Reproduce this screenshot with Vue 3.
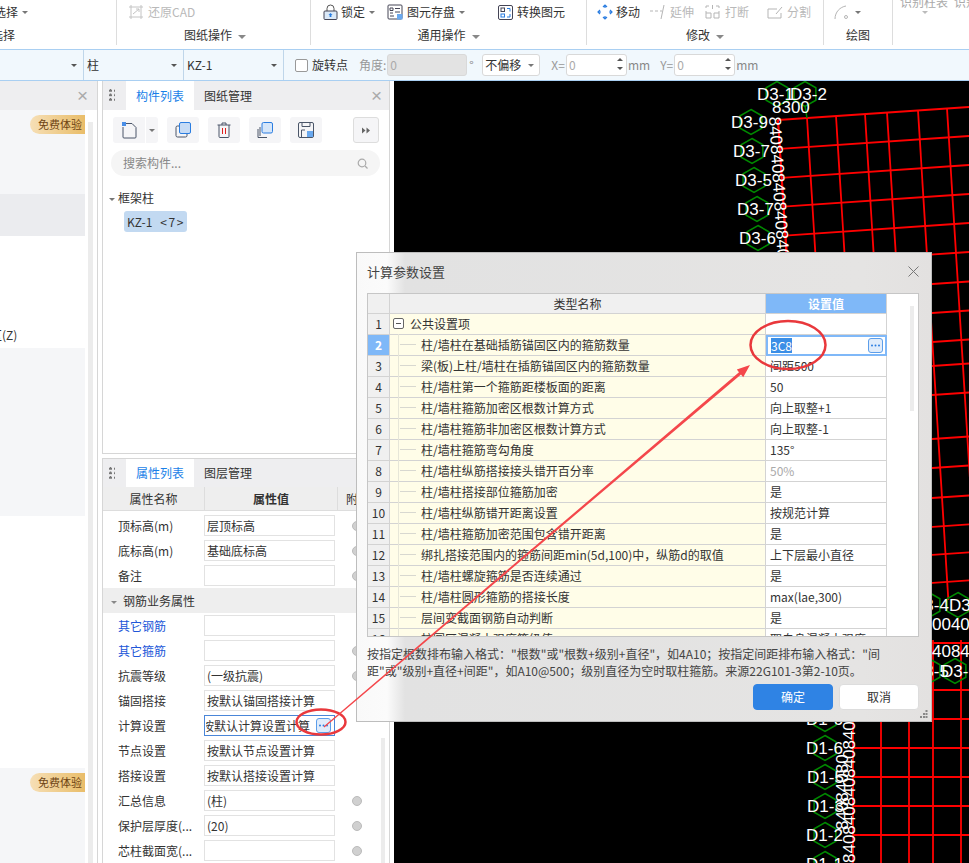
<script setup>
const props = [
  { label: '顶标高(m)', value: '层顶标高', radio: true },
  { label: '底标高(m)', value: '基础底标高', radio: true },
  { label: '备注', value: '', radio: true },
  { group: '钢筋业务属性' },
  { label: '其它钢筋', value: '', link: true },
  { label: '其它箍筋', value: '', link: true, radio: true },
  { label: '抗震等级', value: '(一级抗震)', radio: true },
  { label: '锚固搭接', value: '按默认锚固搭接计算' },
  { label: '计算设置', value: '按默认计算设置计算', focus: true },
  { label: '节点设置', value: '按默认节点设置计算' },
  { label: '搭接设置', value: '按默认搭接设置计算' },
  { label: '汇总信息', value: '(柱)', radio: true },
  { label: '保护层厚度(...', value: '(20)', radio: true },
  { label: '芯柱截面宽(...', value: '', radio: true },
]

const params = [
  { name: '柱/墙柱在基础插筋锚固区内的箍筋数量', value: '3C8', editing: true },
  { name: '梁(板)上柱/墙柱在插筋锚固区内的箍筋数量', value: '间距500' },
  { name: '柱/墙柱第一个箍筋距楼板面的距离', value: '50' },
  { name: '柱/墙柱箍筋加密区根数计算方式', value: '向上取整+1' },
  { name: '柱/墙柱箍筋非加密区根数计算方式', value: '向上取整-1' },
  { name: '柱/墙柱箍筋弯勾角度', value: '135°' },
  { name: '柱/墙柱纵筋搭接接头错开百分率', value: '50%', muted: true },
  { name: '柱/墙柱搭接部位箍筋加密', value: '是' },
  { name: '柱/墙柱纵筋错开距离设置', value: '按规范计算' },
  { name: '柱/墙柱箍筋加密范围包含错开距离', value: '是' },
  { name: '绑扎搭接范围内的箍筋间距min(5d,100)中，纵筋d的取值', value: '上下层最小直径' },
  { name: '柱/墙柱螺旋箍筋是否连续通过', value: '是' },
  { name: '柱/墙柱圆形箍筋的搭接长度', value: 'max(lae,300)' },
  { name: '层间变截面钢筋自动判断', value: '是' },
  { name: '柱圆区混凝土强度等级值', value: '取自身混凝土强度' },
]

// upper grid is slightly rotated, lines are listed by where they cross x=932
const rowYs = [109.5, 138.5, 167.5, 196.5, 225.5, 254.5, 284, 313, 342, 366, 395, 439, 468, 498, 527, 555, 583]
const upperRows = rowYs.map((y, i) => {
  const x1 = 778 + (((y + 10.5 - 120) * 0.06))
  return { x1, y1: y + (932 - x1) * 0.0683, x2: 969, y2: y - 37 * 0.0683, key: i }
})
const upperCols = [778, 807, 836, 865, 887, 918, 947].map((x) => {
  const y1 = 120 - (x - 778) * 0.0683
  return { x1: x, y1, x2: x + (600 - y1) * 0.062, y2: 600 }
})
const lowerRows = [643, 690, 719, 748, 777, 806, 835]
const lowerCols = [853, 881, 909, 933, 961]

const hex = (cx, cy) => {
  const r = 12.5
  const w = r * 0.87
  return `M${cx} ${cy - r}L${cx + w} ${cy - r / 2}L${cx + w} ${cy + r / 2}L${cx} ${cy + r}L${cx - w} ${cy + r / 2}L${cx - w} ${cy - r / 2}Z`
}
const bubbles = [
  { cx: 777, cy: 94, tx: 757, ty: 100, t: 'D3-1' },
  { cx: 805, cy: 94, tx: 790, ty: 100, t: 'D3-2' },
  { cx: 751, cy: 122, tx: 731, ty: 128, t: 'D3-9' },
  { cx: 752, cy: 151, tx: 733, ty: 157, t: 'D3-7' },
  { cx: 754, cy: 180, tx: 735, ty: 186, t: 'D3-5' },
  { cx: 757, cy: 209, tx: 737, ty: 215, t: 'D3-7' },
  { cx: 758, cy: 238, tx: 739, ty: 244, t: 'D3-6' },
  { cx: 825, cy: 719, tx: 806, ty: 725, t: 'D1-6' },
  { cx: 825, cy: 748, tx: 806, ty: 754, t: 'D1-6' },
  { cx: 825, cy: 777, tx: 807, ty: 783, t: 'D1-5' },
  { cx: 825, cy: 806, tx: 807, ty: 812, t: 'D1-3' },
  { cx: 825, cy: 835, tx: 806, ty: 841, t: 'D1-2' },
  { cx: 825, cy: 864, tx: 806, ty: 870, t: 'D1-1' },
  { cx: 929, cy: 605, tx: 912, ty: 611, t: 'D3-4' },
  { cx: 958, cy: 605, tx: 949, ty: 611, t: 'D3-' },
  { cx: 929, cy: 671, tx: 912, ty: 677, t: 'D3-5' },
  { cx: 955, cy: 671, tx: 941, ty: 677, t: 'D3-6' },
]
</script>

<template>
  <div class="app">
    <div class="ribbon">
      <div class="rgroup g1">
        <div class="tools"><span>选择</span><i class="caret"></i></div>
        <div class="rlabel">选择</div>
      </div>
      <div class="rgroup g2">
        <div class="tools off">
          <svg class="ico" width="16" height="16" viewBox="0 0 16 16" fill="none" stroke="#c4c4c4"><path d="M1 3h14M1 13h14M3 1v14M13 1v14M5 10l6-5M8 5l3 0v3"/></svg>
          <span>还原CAD</span>
        </div>
        <div class="rlabel">图纸操作<i class="caret big"></i></div>
      </div>
      <div class="rgroup g3">
        <div class="tools">
          <span class="tool t-lock">
            <svg class="ico" width="15" height="16" viewBox="0 0 15 16" fill="none"><path d="M4 7V4.500a3.500 3.500 0 0 1 7 0V7" stroke="#555"/><rect x="1" y="7" width="13" height="8.500" rx="1" fill="#dbe9f8" stroke="#445"/><path d="M7.500 9l2 2H8.400v2H6.600v-2H5.500z" fill="#2a7de1"/></svg>
            <span>锁定</span><i class="caret"></i>
          </span>
          <span class="tool t-save">
            <svg class="ico" width="16" height="16" viewBox="0 0 16 16" fill="none"><rect x="1" y="1" width="14" height="14" rx="1" stroke="#445"/><path d="M3 4h3v2.500H3zM8 4.500h5M3 9h3M8 8h5M3 12h4" stroke="#445"/><rect x="10" y="10" width="5.500" height="5.500" fill="#6aa9ef"/></svg>
            <span>图元存盘</span><i class="caret"></i>
          </span>
          <span class="tool t-conv">
            <svg class="ico" width="15" height="15" viewBox="0 0 15 15" fill="none"><rect x=".5" y=".5" width="14" height="14" rx="1.500" stroke="#445"/><rect x="3" y="3" width="3.500" height="3.500" stroke="#445"/><rect x="3" y="9" width="3.500" height="3" stroke="#2a7de1"/><path d="M9 3.500h3v3M12 9v3H9" stroke="#2a7de1"/></svg>
            <span>转换图元</span>
          </span>
        </div>
        <div class="rlabel">通用操作<i class="caret big"></i></div>
      </div>
      <div class="rgroup g4">
        <div class="tools">
          <span class="tool">
            <svg class="ico" width="16" height="16" viewBox="0 0 16 16" fill="none" stroke="#2a7de1" stroke-width="1.200"><path d="M8 1v3M8 12v3M1 8h3M12 8h3M6 3l2-2 2 2M6 13l2 2 2-2M3 6L1 8l2 2M13 6l2 2-2 2"/></svg>
            <span>移动</span>
          </span>
          <span class="tool off t-ext">
            <svg class="ico" width="16" height="16" viewBox="0 0 16 16" fill="none" stroke="#b5b5b5"><path d="M0 7h3M5 7h3M10 7h2M14 1l-3 14"/></svg>
            <span>延伸</span>
          </span>
          <span class="tool off t-brk">
            <svg class="ico" width="17" height="16" viewBox="0 0 17 16" fill="none" stroke="#b5b5b5"><path d="M2 7v7h5V9H2M15 7v7h-5V9h5M8.500 1v4M2 4V2h3M15 4V2h-3"/></svg>
            <span>打断</span>
          </span>
          <span class="tool off t-cut">
            <svg class="ico" width="16" height="15" viewBox="0 0 16 15" fill="none" stroke="#b5b5b5"><path d="M10 4H1v9h13V8M9 9l6-7"/></svg>
            <span>分割</span>
          </span>
        </div>
        <div class="rlabel">修改<i class="caret big"></i></div>
      </div>
      <div class="rgroup g5">
        <div class="tools off">
          <svg class="ico" width="14" height="15" viewBox="0 0 14 15" fill="none" stroke="#b5b5b5"><path d="M1 14C1 7 6 2 12 1"/><circle cx="12" cy="12" r="1.500"/></svg>
          <i class="caret"></i>
        </div>
        <div class="rlabel">绘图</div>
      </div>
      <div class="rgroup g6">
        <div class="cutoff">识别柱表<span class="cutoff-2">识别</span></div>
        <i class="caret g6-caret"></i>
      </div>
    </div>

    <div class="optbar">
      <div class="osel w1"><i class="caret"></i></div>
      <div class="osel w2"><span>柱</span><i class="caret"></i></div>
      <div class="osel w2"><span>KZ-1</span><i class="caret"></i></div>
      <span class="check"></span>
      <span class="lbl-rot">旋转点</span>
      <span class="lbl-ang">角度:</span>
      <span class="field ang">0</span>
      <span class="deg">°</span>
      <span class="offset">不偏移<i class="caret"></i></span>
      <span class="lbl-xy lx">X=</span>
      <span class="field num">0<b class="spin"><i class="up"></i><i class="down"></i></b></span>
      <span class="unit">mm</span>
      <span class="lbl-xy ly">Y=</span>
      <span class="field num">0<b class="spin"><i class="up"></i><i class="down"></i></b></span>
      <span class="unit">mm</span>
    </div>

    <div class="work">
      <div class="leftp">
        <div class="ltitle"><span class="xmark">×</span></div>
        <div class="lbody">
          <div class="lrows">
            <div class="lr r1"><span class="badge">免费体验</span></div>
            <div class="lr r2"></div>
            <div class="lr r3"><span class="ztext">区(Z)</span></div>
            <div class="lr r4"></div>
            <div class="lr r5"></div>
            <div class="lr r6"><span class="badge">免费体验</span></div>
          </div>
          <div class="ltrack"></div>
        </div>
      </div>

      <div class="midc">
        <div class="panel top">
          <div class="tabbar">
            <span class="grip"></span>
            <span class="tab on">构件列表</span>
            <span class="tab">图纸管理</span>
            <span class="xmark tabx">×</span>
          </div>
          <div class="tbtns">
            <span class="tbtn first">
              <svg width="17" height="17" viewBox="0 0 17 17" fill="none"><path d="M3 1.500h8l4 4V15a1 1 0 0 1-1 1H3a1 1 0 0 1-1-1V5" stroke="#4a5568"/><rect x="1" y="0" width="4" height="4" fill="#4a8fe8"/></svg>
            </span>
            <span class="tbtn more"><i class="caret"></i></span>
            <span class="tbtn">
              <svg width="16" height="16" viewBox="0 0 16 16" fill="none"><rect x="1" y="4" width="11" height="11" rx="1.500" stroke="#4a5568"/><rect x="4.500" y=".5" width="11" height="11" rx="1.500" fill="#c6dbf5" stroke="#2a7de1"/></svg>
            </span>
            <span class="tbtn">
              <svg width="14" height="16" viewBox="0 0 14 16" fill="none" stroke="#4a5568"><path d="M.5 3h13M5 3V1h4v2M2 3v11.500a1 1 0 0 0 1 1h8a1 1 0 0 0 1-1V3"/><path d="M5.500 6v6M8.500 6v6" stroke="#e02020"/></svg>
            </span>
            <span class="tbtn">
              <svg width="16" height="16" viewBox="0 0 16 16" fill="none"><path d="M3 5v9M1 7v8.500h9" stroke="#4a5568"/><rect x="5" y=".5" width="10.500" height="10.500" rx="1.500" fill="#d6e6f9" stroke="#2a7de1"/></svg>
            </span>
            <span class="tbtn">
              <svg width="16" height="16" viewBox="0 0 16 16" fill="none"><rect x=".5" y=".5" width="15" height="15" rx="1.500" stroke="#4a5568"/><path d="M4 .5v4h8v-4M3.500 15.500V8H7" stroke="#4a5568"/><rect x="9" y="9" width="6" height="6" fill="#6aa9ef"/></svg>
            </span>
            <span class="tbtn expand">
              <svg width="8" height="7" viewBox="0 0 8 7" fill="#666"><path d="M0 .5l3.500 3-3.500 3zM4.500 .5l3.500 3-3.500 3z"/></svg>
            </span>
          </div>
          <div class="search">
            <span>搜索构件...</span>
            <svg width="11" height="11" viewBox="0 0 11 11" fill="none" stroke="#aaa" stroke-width="1.200"><circle cx="5" cy="5" r="3.800"/><path d="M8 8l2.500 2.500"/></svg>
          </div>
          <div class="tree"><i class="caret"></i>框架柱</div>
          <div class="chip">KZ-1<span class="chip-n">&lt;7&gt;</span></div>
        </div>

        <div class="panel bottom">
          <div class="tabbar">
            <span class="grip"></span>
            <span class="tab on">属性列表</span>
            <span class="tab">图层管理</span>
          </div>
          <div class="phead">
            <span class="pc1">属性名称</span>
            <span class="pc2">属性值</span>
            <span class="pc3">附加</span>
          </div>
          <div class="pbody">
            <template v-for="p in props" :key="p.label || p.group">
              <div v-if="p.group" class="pgroup"><i class="caret"></i>{{ p.group }}</div>
              <div v-else class="prow">
                <span class="plabel" :class="{ link: p.link }">{{ p.label }}</span>
                <span class="pval" :class="{ focus: p.focus }">
                  <span class="ptext">{{ p.value }}</span>
                  <b v-if="p.focus" class="dots">
                    <svg width="9" height="3" viewBox="0 0 9 3" fill="#2a7de1"><circle cx="1" cy="1.500" r="1"/><circle cx="4.500" cy="1.500" r="1"/><circle cx="8" cy="1.500" r="1"/></svg>
                  </b>
                </span>
                <span v-if="p.radio" class="radio"></span>
              </div>
            </template>
          </div>
          <div class="ptrack"></div>
        </div>
      </div>

      <div class="canvas">
        <svg class="cad" width="575" height="782" viewBox="394 81 575 782">
          <g stroke="#f00" stroke-width="1.800">
            <line x1="778" y1="120" x2="810" y2="600" />
            <line v-for="r in upperRows" :key="r.key" :x1="r.x1" :y1="r.y1" :x2="r.x2" :y2="r.y2" />
            <line v-for="c in upperCols" :key="c.x1" :x1="c.x1" :y1="c.y1" :x2="c.x2" :y2="c.y2" />
            <line v-for="y in lowerRows" :key="y" x1="853" :y1="y" x2="969" :y2="y" />
            <line v-for="x in lowerCols" :key="x" :x1="x" y1="640" :x2="x" y2="863" />
          </g>
          <g fill="none" stroke="#008a00" stroke-width="1.500">
            <line x1="805" y1="106" x2="807" y2="118" />
            <path v-for="b in bubbles" :key="b.t + b.cy" :d="hex(b.cx, b.cy)" />
          </g>
          <text v-for="b in bubbles" :key="b.t + b.ty" :x="b.tx" :y="b.ty" class="cadt">{{ b.t }}</text>
          <text x="772" y="113" class="cadt">8300</text>
          <text class="cadt" transform="translate(769 117) rotate(86.500)">840840840840840840</text>
          <text class="cadt" transform="translate(855 863) rotate(-90)">84084084084084084</text>
          <text class="cadt" transform="translate(848 830) rotate(-90)">84084080</text>
          <text x="932" y="630" class="cadt">00408408</text>
          <text x="932" y="657" class="cadt">408484</text>
        </svg>
      </div>
    </div>

    <div class="dialog">
      <div class="dhead">
        <span>计算参数设置</span>
        <svg width="11" height="11" viewBox="0 0 11 11" stroke="#777" fill="none"><path d="M.5.500l10 10M10.500.500l-10 10"/></svg>
      </div>
      <div class="dtable">
        <div class="trow thead">
          <span class="cnum"></span>
          <span class="cname">类型名称</span>
          <span class="cval">设置值</span>
        </div>
        <div class="trow">
          <span class="cnum">1</span>
          <span class="cname groupname"><i class="minus"></i>公共设置项</span>
          <span class="cval"></span>
        </div>
        <div v-for="(r, i) in params" :key="r.name" class="trow" :class="{ active: r.editing }">
          <span class="cnum">{{ i + 2 }}</span>
          <span class="cname"><i class="branch"></i>{{ r.name }}</span>
          <span class="cval" :class="{ muted: r.muted, editing: r.editing }">
            <span :class="{ sel: r.editing }">{{ r.value }}</span>
            <b v-if="r.editing" class="dots">
              <svg width="9" height="3" viewBox="0 0 9 3" fill="#2a7de1"><circle cx="1" cy="1.500" r="1"/><circle cx="4.500" cy="1.500" r="1"/><circle cx="8" cy="1.500" r="1"/></svg>
            </b>
          </span>
        </div>
        <div class="tscroll"></div>
      </div>
      <div class="dnote">
        <div>按指定根数排布输入格式："根数"或"根数+级别+直径"，如4A10；按指定间距排布输入格式："间</div>
        <div>距"或"级别+直径+间距"，如A10@500；级别直径为空时取柱箍筋。来源22G101-3第2-10页。</div>
      </div>
      <div class="dbtns">
        <button class="btn primary">确定</button>
        <button class="btn">取消</button>
      </div>
      <svg class="dgrip" width="8" height="8" viewBox="0 0 8 8" fill="#888"><rect x="5.500" y="0" width="2" height="2"/><rect x="3" y="3" width="2" height="2"/><rect x="5.500" y="3" width="2" height="2"/><rect x="0" y="6" width="2" height="2"/><rect x="3" y="6" width="2" height="2"/><rect x="5.500" y="6" width="2" height="2"/></svg>
    </div>

    <svg class="marks" width="969" height="863" viewBox="0 0 969 863" fill="none">
      <ellipse cx="788" cy="345" rx="37.500" ry="24" stroke="#e9383c" stroke-width="2.500" />
      <ellipse cx="321" cy="722" rx="24.500" ry="12.500" stroke="#e9383c" stroke-width="2.500" />
      <polygon points="750,365 743.200,377.200 741,374.500 324.400,727.400 323.600,726.600 739,372.300 736.800,369.600" fill="#f4474b" />
    </svg>
  </div>
</template>

<style scoped>
.app {
  position: relative;
  width: 969px;
  height: 863px;
  overflow: hidden;
  background: #fff;
  font: 12px/16px "Noto Sans CJK SC", "Noto Sans", sans-serif;
  color: #333;
}
i, b { font-style: normal; }
.caret {
  display: inline-block;
  width: 0;
  height: 0;
  border-left: 3px solid transparent;
  border-right: 3px solid transparent;
  border-top: 3px solid #777;
  vertical-align: middle;
}
.caret.big {
  border-left-width: 4px;
  border-right-width: 4px;
  border-top-width: 4px;
  margin-left: 6px;
  border-top-color: #888;
}

/* ribbon */
.ribbon {
  display: flex;
  height: 49px;
  border-bottom: 1px solid #a9cff2;
  overflow: hidden;
}
.rgroup {
  height: 45px;
  border-right: 1px solid #ddd;
  flex: none;
  box-sizing: border-box;
}
.g1 { width: 117px; }
.g2 { width: 194px; }
.g3 { width: 276px; }
.g4 { width: 237px; }
.g5 { width: 69px; }
.g6 { flex: 1; border-right: 0; position: relative; }
.tools {
  display: flex;
  align-items: center;
  height: 24px;
}
.rlabel {
  height: 21px;
  line-height: 21px;
  text-align: center;
  white-space: nowrap;
}
.tool {
  display: flex;
  align-items: center;
  flex: none;
}
.ico { flex: none; margin-right: 4px; }
.off { color: #b9b9b9; }
.g1 .tools { margin-left: -6px; }
.g1 .tools .caret { margin-left: 4px; }
.g1 .rlabel { margin-left: -9px; text-align: left; }
.g2 .tools { padding-left: 11px; }
.g2 .rlabel { padding-left: 3px; }
.g3 .tools { padding-left: 12px; }
.g3 .tools .caret { margin-left: 4px; }
.t-lock .ico { margin-right: 3px; }
.t-save { margin-left: 12px; }
.t-conv { margin-left: 33px; }
.g4 .tools { padding-left: 10px; }
.g4 .tool:first-child .ico { margin-right: 3px; }
.t-ext { margin-left: 10px; }
.t-brk { margin-left: 10px; }
.t-cut { margin-left: 18px; }
.g5 .tools { padding-left: 10px; }
.g5 .tools .caret { margin-left: 3px; }
.cutoff {
  position: absolute;
  left: 7px;
  top: -6px;
  color: #aaa;
  white-space: nowrap;
}
.cutoff-2 { margin-left: 6px; }
.g6-caret {
  position: absolute;
  left: 29px;
  top: 11px;
  border-top-color: #bbb;
}

/* options bar */
.optbar {
  display: flex;
  align-items: center;
  height: 31px;
  box-sizing: border-box;
  background: #f1f8fd;
  border-bottom: 1px solid #a9cff2;
}
.osel {
  display: flex;
  align-items: center;
  justify-content: space-between;
  height: 30px;
  box-sizing: border-box;
  border-right: 1px solid #bfd6ea;
  padding: 0 6px 0 3px;
  flex: none;
}
.w1 { width: 84px; justify-content: flex-end; }
.w2 { width: 100px; }
.osel .caret { border-top-color: #555; }
.check {
  width: 13px;
  height: 13px;
  margin-left: 11px;
  border: 1px solid #999;
  border-radius: 2px;
  background: #fff;
  box-sizing: border-box;
  flex: none;
}
.lbl-rot { margin-left: 4px; }
.lbl-ang { margin-left: 11px; color: #999; }
.field {
  box-sizing: border-box;
  height: 22px;
  line-height: 20px;
  border: 1px solid #d9d9d9;
  border-radius: 3px;
  padding-left: 2px;
  color: #aaa;
  flex: none;
}
.ang { width: 80px; margin-left: 1px; background: #e3e3e3; }
.deg { width: 15px; padding-left: 2px; color: #888; box-sizing: border-box; }
.offset {
  display: flex;
  align-items: center;
  justify-content: space-between;
  box-sizing: border-box;
  width: 58px;
  height: 22px;
  padding: 0 5px 0 2px;
  border: 1px solid #d9d9d9;
  border-radius: 3px;
  background: #fff;
  flex: none;
}
.lbl-xy { color: #999; }
.lx { margin-left: 11px; margin-right: 1px; }
.ly { margin-left: 10px; margin-right: 1px; }
.num {
  position: relative;
  width: 61px;
  background: #fff;
}
.spin {
  position: absolute;
  right: 3px;
  top: 3px;
  display: flex;
  flex-direction: column;
  gap: 6px;
}
.spin i {
  width: 0;
  height: 0;
  border-left: 3px solid transparent;
  border-right: 3px solid transparent;
}
.spin .up { border-bottom: 3px solid #555; }
.spin .down { border-top: 3px solid #555; }
.unit { margin-left: 1px; color: #888; }

/* workspace */
.work {
  display: flex;
  height: 783px;
}
.leftp {
  width: 98px;
  flex: none;
  border-right: 1px solid #d6d6d6;
  box-sizing: border-box;
}
.ltitle {
  height: 29px;
  background: #eeeef0;
  position: relative;
}
.xmark {
  position: absolute;
  right: 9px;
  top: 5px;
  font-size: 19px;
  line-height: 19px;
  color: #aaa;
  font-family: "Liberation Sans", sans-serif;
}
.lbody { display: flex; }
.lrows { width: 85px; flex: none; }
.lr { position: relative; overflow: hidden; }
.r1 { height: 84px; background: #f5f6f8; }
.r2 { height: 42px; background: #ebecef; }
.r3 { height: 112px; background: #fff; }
.r4 { height: 168px; background: #f5f6f8; }
.r5 { height: 252px; background: #fff; }
.r6 { height: 100px; background: #f5f6f8; }
.badge {
  position: absolute;
  right: 0;
  top: 5px;
  width: 55px;
  height: 19px;
  line-height: 19px;
  box-sizing: border-box;
  padding-left: 8px;
  border-radius: 10px 0 0 10px;
  background: linear-gradient(90deg, #f6dfb6, #e9bd69);
  color: #6e4413;
  font-size: 11px;
  white-space: nowrap;
}
.ztext {
  position: absolute;
  left: -10px;
  top: 91px;
  white-space: nowrap;
}
.ltrack {
  width: 5px;
  margin: 12px 0 0 3px;
  background: #ececec;
}
.midc {
  width: 288px;
  margin-left: 4px;
  flex: none;
  display: flex;
  flex-direction: column;
  gap: 4px;
}
.panel {
  position: relative;
  box-sizing: border-box;
  border: 1px solid #d6d6d6;
  border-top: 0;
  background: #fff;
  overflow: hidden;
}
.panel.top { height: 373px; }
.panel.bottom { flex: 1; border-top: 1px solid #d6d6d6; }
.tabbar {
  display: flex;
  height: 28px;
  line-height: 28px;
  background: #eeeef0;
  position: relative;
}
.panel.top .tabbar { height: 29px; line-height: 29px; }
.grip {
  width: 6px;
  height: 13px;
  margin: 8px 0 0 6px;
  flex: none;
  background: radial-gradient(circle at 1.500px 1.500px, #777 1.300px, transparent 1.500px) 0 0 / 5px 4.500px;
}
.tab {
  width: 68px;
  text-align: center;
  flex: none;
}
.tab:nth-child(2) { margin-left: 11px; }
.tab.on { background: #fff; color: #1a7fe8; }
.tabx { right: 7px; top: 5px; }
.tbtns {
  display: flex;
  margin: 7px 0 0 10px;
  height: 26px;
}
.tbtn {
  display: flex;
  align-items: center;
  justify-content: center;
  width: 32px;
  height: 26px;
  margin-left: 9px;
  border-radius: 3px;
  background: #f5f5f7;
  flex: none;
}
.tbtn.first { margin-left: 0; border-radius: 3px 0 0 3px; }
.tbtn.more { width: 12px; margin-left: 1px; border-radius: 0 3px 3px 0; }
.tbtn.expand {
  width: 26px;
  margin-left: 31px;
  box-sizing: border-box;
  border: 1px solid #ddd;
}
.search {
  display: flex;
  align-items: center;
  justify-content: space-between;
  margin: 7px 9px 0 8px;
  height: 26px;
  padding: 0 12px;
  border-radius: 13px;
  background: #f5f5f5;
  color: #888;
}
.tree {
  margin: 14px 0 0 6px;
  height: 16px;
}
.tree .caret { margin-right: 3px; border-top-color: #777; }
.chip {
  width: 63px;
  height: 21px;
  margin: 5px 0 0 21px;
  line-height: 21px;
  box-sizing: border-box;
  padding-left: 3px;
  border-radius: 3px;
  background: #c2d9f1;
  white-space: nowrap;
}
.chip-n { margin-left: 8px; letter-spacing: 1.500px; }

/* property table */
.phead {
  display: flex;
  height: 24px;
  line-height: 24px;
  background: #eeeeee;
  border-bottom: 1px solid #ddd;
  box-sizing: border-box;
}
.pc1 { width: 101px; text-align: center; border-right: 1px solid #ddd; }
.pc2 { width: 132px; text-align: center; border-right: 1px solid #ddd; font-weight: 700; }
.pc3 { margin-left: 8px; white-space: nowrap; }
.pbody { padding-top: 2px; }
.prow {
  display: flex;
  align-items: center;
  height: 25px;
  position: relative;
}
.plabel {
  width: 101px;
  padding-left: 15px;
  box-sizing: border-box;
  flex: none;
  white-space: nowrap;
}
.plabel.link { color: #2156d8; }
.pval {
  display: flex;
  align-items: center;
  justify-content: space-between;
  box-sizing: border-box;
  width: 131px;
  height: 21px;
  padding: 0 2px;
  border: 1px solid #e2e2e2;
  flex: none;
  overflow: hidden;
  white-space: nowrap;
}
.pval.focus { border-color: #4a86d8; padding: 0 3px 0 1px; }
.ptext { flex: none; }
.pval.focus .ptext { width: 104px; display: flex; justify-content: flex-end; overflow: hidden; }
.radio {
  position: absolute;
  left: 249px;
  top: 8px;
  width: 8px;
  height: 8px;
  border-radius: 50%;
  background: #d0d0d0;
  border: 1px solid #bbb;
}
.pgroup {
  height: 25px;
  line-height: 25px;
  background: #eeeeee;
  padding-left: 8px;
}
.pgroup .caret { margin-right: 6px; border-top-color: #888; }
.ptrack {
  position: absolute;
  right: 4px;
  top: 279px;
  bottom: 0;
  width: 4px;
  background: #ececec;
}
.dots {
  display: flex;
  align-items: center;
  justify-content: center;
  width: 15px;
  height: 15px;
  box-sizing: border-box;
  border: 1px solid #5c9eea;
  border-radius: 3px;
  background: #e0ecfb;
  flex: none;
}

/* canvas */
.canvas {
  flex: 1;
  margin-left: 4px;
  background: #000;
  overflow: hidden;
}
.cad { display: block; }
.cadt {
  fill: #fff;
  stroke: none;
  font: 17px "Liberation Sans", sans-serif;
}

/* dialog */
.dialog {
  position: absolute;
  left: 356px;
  top: 252px;
  width: 576px;
  height: 470px;
  box-sizing: border-box;
  border: 1px solid #bdbdbd;
  background: linear-gradient(90deg, #f9f9f9 0, #fbfbfb 30px, #e2e2e2 48px, #e5e4e3 88%, #e3e1e0 100%);
}
.dhead {
  display: flex;
  align-items: center;
  justify-content: space-between;
  box-sizing: border-box;
  height: 40px;
  padding: 0 12px 3px 10px;
  font-size: 13px;
  color: #444;
}
.dtable {
  position: relative;
  width: 552px;
  height: 344px;
  margin-left: 10px;
  box-sizing: border-box;
  border: 1px solid #c6c6c6;
  background: #fff;
  overflow: hidden;
}
.trow {
  display: flex;
  height: 21px;
  line-height: 19px;
  box-sizing: border-box;
}
.trow.thead { height: 20px; }
.trow span.cnum, .trow span.cname, .trow span.cval {
  box-sizing: border-box;
  border-bottom: 1px solid #d3d3d3;
  border-right: 1px solid #d3d3d3;
  flex: none;
  white-space: nowrap;
}
.cnum {
  width: 22px;
  background: #f0f0f0;
  text-align: center;
}
.cname {
  width: 376px;
  padding-bottom: 1px;
  background: #fffde8;
  display: flex;
  align-items: center;
}
.cval {
  width: 121px;
  padding-left: 4px;
  position: relative;
}
.thead .cnum, .thead .cname { background: #f0f0f0; justify-content: center; }
.thead .cval {
  background: #7fb8f8;
  color: #fff;
  font-weight: 700;
  text-align: center;
  padding-left: 0;
  border-color: #7fb8f8;
}
.active .cnum { background: #7fb8f8; color: #fff; font-weight: 700; }
.muted { color: #aaa; }
.groupname { padding-left: 3px; }
.minus {
  position: relative;
  width: 11px;
  height: 11px;
  margin-right: 6px;
  box-sizing: border-box;
  border: 1px solid #666;
  border-radius: 2px;
  background: #fff;
  flex: none;
}
.minus::after {
  content: "";
  position: absolute;
  left: 2px;
  top: 4px;
  width: 5px;
  height: 1px;
  background: #555;
}
.branch {
  position: relative;
  width: 23px;
  height: 21px;
  flex: none;
  border-left: 1px solid #e6e6d8;
  margin-left: 8px;
  box-sizing: border-box;
}
.branch::after {
  content: "";
  position: absolute;
  left: 1px;
  top: 10px;
  width: 16px;
  height: 1px;
  background: #d8d8d0;
}
.trow .cval.editing {
  display: flex;
  align-items: center;
  justify-content: space-between;
  border: 2px solid #7fb8f8;
  padding: 0 2px 0 3px;
}
.sel {
  background: #3a8ee6;
  color: #fff;
  line-height: 15px;
}
.tscroll {
  position: absolute;
  right: 4px;
  top: 12px;
  width: 4px;
  height: 105px;
  background: #ececec;
}
.dnote {
  margin: 8px 0 0 10px;
  line-height: 17px;
  height: 34px;
  white-space: nowrap;
  color: #444;
}
.dbtns {
  display: flex;
  justify-content: flex-end;
  gap: 6px;
  margin: 5px 12px 0 0;
}
.btn {
  width: 80px;
  height: 26px;
  padding: 0;
  border: 1px solid #ddd;
  border-radius: 4px;
  background: #fff;
  color: #333;
  font: inherit;
}
.btn.primary {
  border-color: #2f83e4;
  background: #2f83e4;
  color: #fff;
}
.dgrip {
  position: absolute;
  right: 3px;
  bottom: 3px;
}
.marks {
  position: absolute;
  left: 0;
  top: 0;
  pointer-events: none;
}
</style>
